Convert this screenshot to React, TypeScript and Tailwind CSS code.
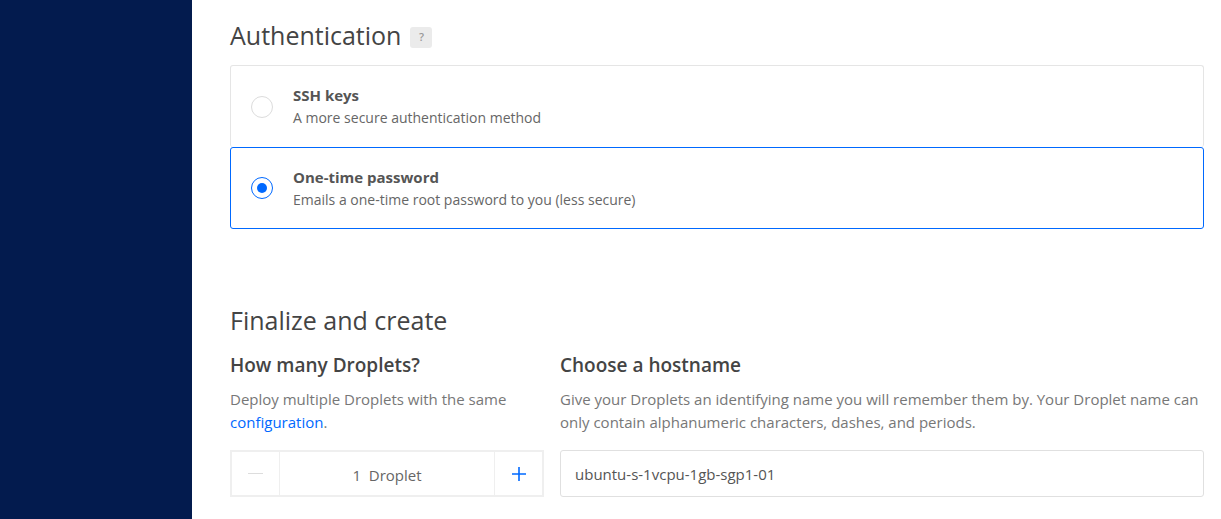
import React, { useState } from "react";

// Droplet create page — authentication + finalize section

const font = { fontFamily: '"Open Sans", "Liberation Sans", sans-serif' };

function Radio({ checked }: { checked: boolean }) {
  return (
    <span
      className={
        "flex h-[22px] w-[22px] shrink-0 items-center justify-center rounded-full border bg-white " +
        (checked ? "border-[#0069ff]" : "border-[#dcdcdc]")
      }
    >
      {checked && <span className="h-[10px] w-[10px] rounded-full bg-[#0069ff]" />}
    </span>
  );
}

export default function App() {
  const [method, setMethod] = useState<"ssh" | "password">("password");
  const [count, setCount] = useState(1);

  const options = [
    { id: "ssh" as const, title: "SSH keys", desc: "A more secure authentication method" },
    {
      id: "password" as const,
      title: "One-time password",
      desc: "Emails a one-time root password to you (less secure)",
    },
  ];

  return (
    <div className="flex min-h-[519px] bg-white text-[#444]" style={font}>
      {/* Sidebar */}
      <aside className="w-[192px] shrink-0 bg-[#031b4e]" />

      <main className="flex-1 pl-[38px] pr-[17px]">
        {/* Authentication */}
        <div className="flex items-center gap-[9px] pt-[17px]">
          <h2 className="text-[25px] font-normal leading-[36px] text-[#444]">Authentication</h2>
          <span className="mt-[4px] flex h-[21px] w-[22px] items-center justify-center rounded-[3px] bg-[#ebebeb] text-[11px] font-semibold text-[#999]">
            ?
          </span>
        </div>

        <div className="mt-[12px] flex flex-col">
          {options.map((o) => {
            const active = method === o.id;
            return (
              <button
                key={o.id}
                onClick={() => setMethod(o.id)}
                className={
                  "flex h-[82px] items-center gap-[20px] rounded-[3px] border px-[20px] text-left " +
                  (active ? "border-[#0069ff]" : "border-[#e5e5e5] border-b-0")
                }
              >
                <Radio checked={active} />
                <div className="flex flex-col">
                  <span className="mb-[1px] text-[15px] font-bold leading-[22px] text-[#555]">{o.title}</span>
                  <span className="text-[14px] leading-[22px] text-[#666]">{o.desc}</span>
                </div>
              </button>
            );
          })}
        </div>

        {/* Finalize */}
        <h2 className="mt-[73px] text-[25px] font-normal leading-[36px] text-[#444]">Finalize and create</h2>

        <div className="mt-[12px] flex gap-[16px]">
          <div className="w-[314px] shrink-0">
            <h3 className="text-[19px] font-semibold leading-[30px] text-[#444]">How many Droplets?</h3>
            <p className="mt-[8px] text-[15px] leading-[23px] text-[#777]">
              Deploy multiple Droplets with the same{" "}
              <a className="text-[#0069ff]">configuration</a>.
            </p>
            <div className="mt-[16px] flex h-[47px] border-2 border-[#efefef]">
              <button
                onClick={() => setCount(Math.max(1, count - 1))}
                className="flex w-[48px] items-center justify-center border-r border-[#efefef]"
              >
                <span className="h-[1.5px] w-[15px] bg-[#ddd]" />
              </button>
              <div className="flex flex-1 items-center justify-center pt-[3px] text-[15px] text-[#666]">
                {count}&nbsp;&nbsp;Droplet{count > 1 ? "s" : ""}
              </div>
              <button
                onClick={() => setCount(count + 1)}
                className="flex w-[48px] items-center justify-center border-l border-[#efefef]"
              >
                <svg width="16" height="16" viewBox="0 0 16 16">
                  <path d="M8 1v14M1 8h14" stroke="#0069ff" strokeWidth="1.6" />
                </svg>
              </button>
            </div>
          </div>

          <div className="flex-1">
            <h3 className="text-[19px] font-semibold leading-[30px] text-[#444]">Choose a hostname</h3>
            <p className="mt-[8px] text-[15px] leading-[23px] text-[#777]">
              Give your Droplets an identifying name you will remember them by. Your Droplet name can only
              contain alphanumeric characters, dashes, and periods.
            </p>
            <input
              defaultValue="ubuntu-s-1vcpu-1gb-sgp1-01"
              className="mt-[16px] h-[47px] w-full rounded-[3px] border border-[#e0e0e0] px-[14px] text-[15px] text-[#555] outline-none"
            />
          </div>
        </div>
      </main>
    </div>
  );
}
